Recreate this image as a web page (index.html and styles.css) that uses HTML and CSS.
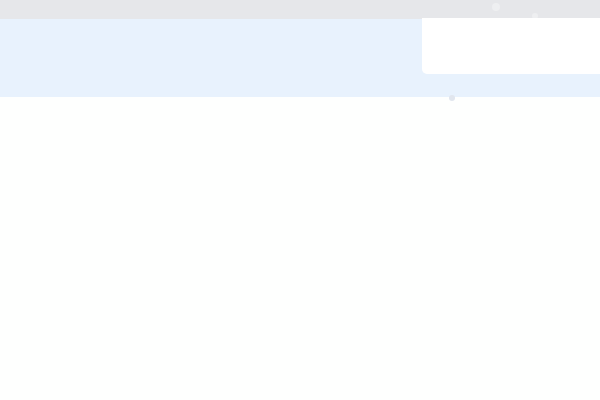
FILE: index.html
```html
<!DOCTYPE html>
<html lang="en">
<head>
  <meta charset="UTF-8">
  <title>Loading</title>
  <link rel="stylesheet" href="styles.css">
</head>
<body>
  <div class="page">
    <!-- Top bar -->
    <div class="topbar">
      <span class="ghost ghost-a"></span>
      <span class="ghost ghost-b"></span>
    </div>

    <!-- Hero band -->
    <div class="hero">
      <div class="panel"></div>
      <span class="dot"></span>
    </div>

    <div class="content"></div>
  </div>
</body>
</html>
```

FILE: styles.css
```css
/* =====================
   Global
   ===================== */
body {
  margin: 0;
  font-family: "Liberation Sans", Arial, sans-serif;
  background: #fefffe;
}

.page {
  position: relative;
  width: 600px;
  height: 400px;
  overflow: hidden;
}

/* =====================
   Top bar
   ===================== */
.topbar {
  position: relative;
  height: 19px;
  background: #e6e7ea;
}

.ghost {
  position: absolute;
  width: 8px;
  height: 8px;
  border-radius: 50%;
  background: #eeeff1;
}

.ghost-a {
  left: 492px;
  top: 3px;
}

.ghost-b {
  left: 532px;
  top: 13px;
  width: 6px;
  height: 6px;
}

/* =====================
   Hero band
   ===================== */
.hero {
  position: relative;
  height: 78px;
  background: #e8f2fd;
}

.panel {
  position: absolute;
  top: -1px;
  right: 0;
  width: 178px;
  height: 56px;
  background: #ffffff;
  border-radius: 0 0 0 5px;
}

.dot {
  position: absolute;
  left: 449px;
  top: 76px;
  width: 6px;
  height: 6px;
  border-radius: 50%;
  background: #e1e6ee;
}

.content {
  height: 303px;
}
```
